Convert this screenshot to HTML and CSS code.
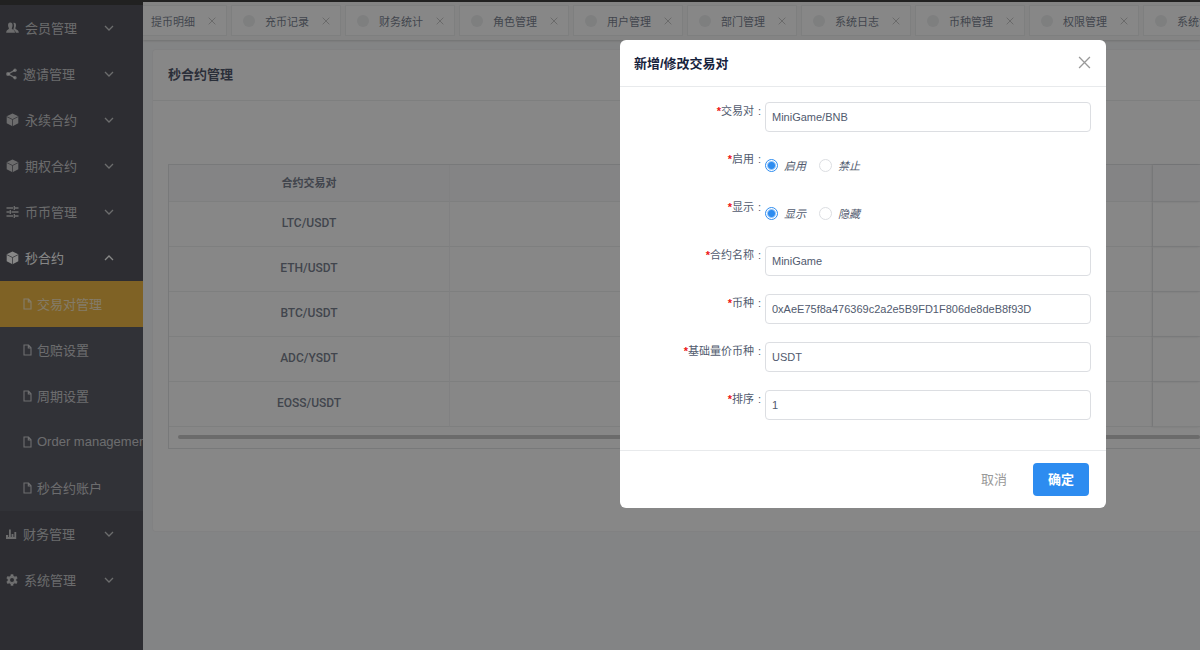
FILE: index.html
```html
<!DOCTYPE html>
<html lang="zh-CN">
  <head>
    <meta charset="UTF-8" />
    <meta name="viewport" content="width=device-width, initial-scale=1.0" />
    <title>秒合约管理</title>
    <link rel="stylesheet" href="styles.css">
  </head>
  <body>
    <!-- icons -->
    <svg class="sprite" aria-hidden="true">
      <symbol id="cube" viewBox="0 0 13 14">
        <path d="M6.5 0.5 L12.3 3.3 V10.3 L6.5 13.3 L0.7 10.3 V3.3 Z" fill="currentColor" />
        <path class="cut" d="M0.7 3.6 L6.5 6.5 L12.3 3.6 M6.5 6.5 V13.3" />
      </symbol>
      <symbol id="down" viewBox="0 0 10 6">
        <path d="M1 1 L5 5 L9 1" fill="none" stroke="currentColor" stroke-width="1.3" />
      </symbol>
      <symbol id="up" viewBox="0 0 10 6">
        <path d="M1 5 L5 1 L9 5" fill="none" stroke="currentColor" stroke-width="1.3" />
      </symbol>
      <symbol id="doc" viewBox="0 0 9 12">
        <path d="M1 1 H5.5 L8 3.8 V11 H1 Z M5.3 1 V4 H8" fill="none" stroke="currentColor" stroke-width="1.1" />
      </symbol>
      <symbol id="close" viewBox="0 0 12 12">
        <path d="M1 1 L11 11 M11 1 L1 11" fill="none" stroke="currentColor" stroke-width="1.2" />
      </symbol>
    </svg>

    <div class="layout">
      <nav class="sidebar">
        <a class="menu-item" href="#">
          <svg width="13" height="12" viewBox="0 0 13 12" fill="currentColor">
            <path d="M7.4 0.8 C9.4 0.4 10.2 1.8 10 3.4 C9.9 4.8 9.3 5.3 9.4 6.6 C9.6 7.8 12.8 7.8 12.8 10.8 H9.8 C9.6 8.6 7.8 8 7.2 7.4 C8.2 5.8 8.3 3 7.4 0.8 Z" />
            <path d="M4.2 0.6 C6.2 0.6 6.7 2.2 6.5 3.9 C6.3 5.2 5.8 5.4 5.8 6.6 C6 7.8 9 7.8 9 10.8 H0.2 C0.2 7.8 2.8 7.8 2.9 6.6 C2.9 5.4 2.3 5.2 2.1 3.9 C1.9 2.2 2.4 0.6 4.2 0.6 Z" />
          </svg>
          <span>会员管理</span>
          <svg class="arrow"><use href="#down" /></svg>
        </a>
        <a class="menu-item" href="#">
          <svg width="11" height="12" viewBox="0 0 11 12" fill="currentColor">
            <path d="M9 2.2 L2.2 6 L9 9.8" fill="none" stroke="currentColor" stroke-width="1.4" />
            <circle cx="9" cy="2.2" r="1.7" /><circle cx="2" cy="6" r="1.9" /><circle cx="9" cy="9.8" r="1.7" />
          </svg>
          <span>邀请管理</span>
          <svg class="arrow"><use href="#down" /></svg>
        </a>
        <a class="menu-item" href="#">
          <svg width="13" height="14"><use href="#cube" /></svg>
          <span>永续合约</span>
          <svg class="arrow"><use href="#down" /></svg>
        </a>
        <a class="menu-item" href="#">
          <svg width="13" height="14"><use href="#cube" /></svg>
          <span>期权合约</span>
          <svg class="arrow"><use href="#down" /></svg>
        </a>
        <a class="menu-item" href="#">
          <svg width="13" height="12" viewBox="0 0 13 12" fill="none" stroke="currentColor" stroke-width="1.3">
            <path d="M0.5 2 H7 M9 2 H12.5 M0.5 6 H3.5 M5.5 6 H12.5 M0.5 10 H7 M9 10 H12.5 M8.3 0 V4 M4.3 4 V8 M8.3 8 V12" />
          </svg>
          <span>币币管理</span>
          <svg class="arrow"><use href="#down" /></svg>
        </a>
        <a class="menu-item open" href="#">
          <svg width="13" height="14"><use href="#cube" /></svg>
          <span>秒合约</span>
          <svg class="arrow"><use href="#up" /></svg>
        </a>
        <div class="submenu">
          <a class="sub-item active" href="#"><svg width="9" height="12"><use href="#doc" /></svg><span>交易对管理</span></a>
          <a class="sub-item" href="#"><svg width="9" height="12"><use href="#doc" /></svg><span>包赔设置</span></a>
          <a class="sub-item" href="#"><svg width="9" height="12"><use href="#doc" /></svg><span>周期设置</span></a>
          <a class="sub-item" href="#"><svg width="9" height="12"><use href="#doc" /></svg><span>Order management</span></a>
          <a class="sub-item" href="#"><svg width="9" height="12"><use href="#doc" /></svg><span>秒合约账户</span></a>
        </div>
        <a class="menu-item" href="#">
          <svg width="11" height="12" viewBox="0 0 11 12" fill="currentColor">
            <path d="M0 7 H2.2 V9 H3 V1.5 H4.8 V9 H5.6 V6 H7.4 V9 H8.4 V4 H10.2 V11 H0 Z" />
          </svg>
          <span>财务管理</span>
          <svg class="arrow"><use href="#down" /></svg>
        </a>
        <a class="menu-item" href="#">
          <svg width="12" height="12" viewBox="0 0 12 12">
            <circle cx="6" cy="6" r="3.2" fill="none" stroke="currentColor" stroke-width="2.4" />
            <path d="M6 0.2 V2 M6 10 V11.8 M1 3.1 L2.6 4 M9.4 8 L11 8.9 M1 8.9 L2.6 8 M9.4 4 L11 3.1" stroke="currentColor" stroke-width="2.6" />
          </svg>
          <span>系统管理</span>
          <svg class="arrow"><use href="#down" /></svg>
        </a>
      </nav>

      <main class="main">
        <div class="tabs">
          <div class="tab first">提币明细<svg><use href="#close" /></svg></div>
          <div class="tab"><i class="dot"></i>充币记录<svg><use href="#close" /></svg></div>
          <div class="tab"><i class="dot"></i>财务统计<svg><use href="#close" /></svg></div>
          <div class="tab"><i class="dot"></i>角色管理<svg><use href="#close" /></svg></div>
          <div class="tab"><i class="dot"></i>用户管理<svg><use href="#close" /></svg></div>
          <div class="tab"><i class="dot"></i>部门管理<svg><use href="#close" /></svg></div>
          <div class="tab"><i class="dot"></i>系统日志<svg><use href="#close" /></svg></div>
          <div class="tab"><i class="dot"></i>币种管理<svg><use href="#close" /></svg></div>
          <div class="tab"><i class="dot"></i>权限管理<svg><use href="#close" /></svg></div>
          <div class="tab"><i class="dot"></i>系统设置<svg><use href="#close" /></svg></div>
        </div>

        <section class="card">
          <h2 class="card-title">秒合约管理</h2>
          <div class="card-body">
            <div class="table-wrap">
              <table class="table">
                <thead>
                  <tr><th class="col-pair">合约交易对</th><th></th><th class="col-fixed"></th></tr>
                </thead>
                <tbody>
                  <tr><td>LTC/USDT</td><td></td><td class="col-fixed"></td></tr>
                  <tr><td>ETH/USDT</td><td></td><td class="col-fixed"></td></tr>
                  <tr><td>BTC/USDT</td><td></td><td class="col-fixed"></td></tr>
                  <tr><td>ADC/YSDT</td><td></td><td class="col-fixed"></td></tr>
                  <tr><td>EOSS/USDT</td><td></td><td class="col-fixed"></td></tr>
                </tbody>
              </table>
              <div class="scrollbar"></div>
            </div>
          </div>
        </section>
      </main>
    </div>

    <div class="mask">
      <form class="modal">
        <div class="modal-header">
          <h2>新增/修改交易对</h2>
          <button type="button" class="close-button" aria-label="关闭"><svg><use href="#close" /></svg></button>
        </div>
        <div class="modal-body">
          <div class="row">
            <label class="label" for="pair"><b>*</b>交易对<span class="colon">:</span></label>
            <input type="text" id="pair" value="MiniGame/BNB" />
          </div>
          <div class="row">
            <span class="label"><b>*</b>启用<span class="colon">:</span></span>
            <label class="radio"><input type="radio" name="enable" checked />启用</label>
            <label class="radio"><input type="radio" name="enable" />禁止</label>
          </div>
          <div class="row">
            <span class="label"><b>*</b>显示<span class="colon">:</span></span>
            <label class="radio"><input type="radio" name="show" checked />显示</label>
            <label class="radio"><input type="radio" name="show" />隐藏</label>
          </div>
          <div class="row">
            <label class="label" for="name"><b>*</b>合约名称<span class="colon">:</span></label>
            <input type="text" id="name" value="MiniGame" />
          </div>
          <div class="row">
            <label class="label" for="coin"><b>*</b>币种<span class="colon">:</span></label>
            <input type="text" id="coin" value="0xAeE75f8a476369c2a2e5B9FD1F806de8deB8f93D" />
          </div>
          <div class="row">
            <label class="label" for="base"><b>*</b>基础量价币种<span class="colon">:</span></label>
            <input type="text" id="base" value="USDT" />
          </div>
          <div class="row">
            <label class="label" for="sort"><b>*</b>排序<span class="colon">:</span></label>
            <input type="text" id="sort" value="1" />
          </div>
        </div>
        <div class="modal-footer">
          <button type="button" class="cancel">取消</button>
          <button type="button" class="confirm">确定</button>
        </div>
      </form>
    </div>
  </body>
</html>
```

FILE: styles.css
```css
* {
  box-sizing: border-box;
  margin: 0;
  padding: 0;
}

body,
input,
button {
  font-family: "Liberation Sans", "Noto Sans CJK SC", sans-serif;
  font-size: 11px;
}

body {
  background-color: #000;
  color: #515a6e;
  overflow: hidden;
}

.sprite {
  display: none;
}

.layout {
  display: flex;
  min-height: 100vh;
}

/* sidebar */
.sidebar {
  flex: none;
  width: 143px;
  border-top: 5px solid #000;
  background-color: #1e202b;
  overflow: hidden;
}

.menu-item,
.sub-item {
  display: flex;
  align-items: center;
  height: 46px;
  color: rgba(255, 255, 255, 0.7);
  font-size: 13px;
  text-decoration: none;
  white-space: nowrap;
}

.menu-item span,
.sub-item span {
  padding-bottom: 2px;
}

.menu-item {
  gap: 6px;
  padding: 0 29px 0 6px;
}

.menu-item.open {
  color: #fff;
}

.menu-item .arrow {
  width: 10px;
  height: 6px;
  margin-left: auto;
}

.cut {
  fill: none;
  stroke: #1e202b;
  stroke-width: 0.7;
}

.submenu {
  background-color: #282b38;
}

.sub-item {
  gap: 5px;
  padding-left: 23px;
}

.sub-item svg {
  flex: none;
}

.sub-item.active {
  background-color: #eba40c;
}

/* main */
.main {
  flex: 1;
  min-width: 0;
  border-top: 2px solid #000;
  background-color: #f5f7f9;
  overflow: hidden;
}

.tabs {
  display: flex;
  gap: 4px;
  height: 38px;
  padding-top: 3px;
  background-color: #f8f8f8;
  box-shadow: 0 1px 2px rgba(0, 0, 0, 0.2);
}

.tab {
  display: flex;
  flex: none;
  align-items: center;
  width: 110px;
  height: 31px;
  padding-left: 11px;
  border: 1px solid #e8eaec;
  background-color: #fff;
  white-space: nowrap;
}

.tab.first {
  width: 84px;
  padding-left: 8px;
  border-left: 0;
}

.tab svg {
  width: 8px;
  height: 8px;
  margin-left: 13px;
  color: #a5a5a5;
}

.dot {
  width: 12px;
  height: 12px;
  margin-right: 10px;
  border-radius: 50%;
  background-color: #e8eaec;
}

.card {
  margin: 9px 0 0 9px;
  border: 1px solid #f0f1f3;
  border-right: 0;
  border-radius: 4px 0 0 4px;
  background-color: #fff;
}

.card-title {
  padding-left: 15px;
  border-bottom: 1px solid #e8eaec;
  color: #17233d;
  font-size: 13px;
  font-weight: 700;
  line-height: 50px;
}

.card-body {
  padding: 63px 0 82px 15px;
}

.table-wrap {
  border: 1px solid #d9dbdf;
  border-right: 0;
}

.table {
  width: 100%;
  border-collapse: separate;
  border-spacing: 0;
  table-layout: fixed;
  text-align: center;
}

.table th,
.table td {
  height: 45px;
  padding-bottom: 2px;
  border-right: 1px solid #f0f1f3;
  border-bottom: 1px solid #e8eaec;
}

.table td {
  font-family: Roboto, sans-serif;
  font-size: 12px;
  font-weight: 500;
}

.table th {
  height: 37px;
  background-color: #f8f8f9;
  font-weight: 700;
}

.table .col-pair {
  width: 281px;
}

.table .col-fixed {
  width: 47px;
  border-right: 0;
  box-shadow: -1px 0 2px rgba(0, 0, 0, 0.15);
}

.scrollbar {
  height: 4px;
  margin: 8px 0 9px 9px;
  border-radius: 2px;
  background-color: #b8b8b8;
}

/* modal */
.mask {
  position: fixed;
  inset: 0;
  display: flex;
  align-items: flex-start;
  justify-content: flex-end;
  padding: 40px 94px 0 0;
  background-color: rgba(55, 55, 55, 0.6);
}

.modal {
  width: 486px;
  border-radius: 6px;
  background-color: #fff;
}

.modal-header {
  display: flex;
  align-items: center;
  justify-content: space-between;
  height: 47px;
  padding: 0 15px 2px 14px;
  border-bottom: 1px solid #e8eaec;
}

.modal-header h2 {
  color: #17233d;
  font-size: 13px;
  font-weight: 700;
}

.close-button {
  width: 13px;
  height: 13px;
  border: 0;
  background: none;
  color: #999;
}

.close-button svg {
  display: block;
  width: 13px;
  height: 13px;
}

.modal-body {
  display: flex;
  flex-direction: column;
  gap: 18px;
  padding: 15px 15px 30px;
}

.row {
  display: flex;
  align-items: center;
  height: 30px;
}

.label {
  flex: none;
  align-self: flex-start;
  width: 130px;
  line-height: 18px;
  text-align: right;
}

.label b {
  color: #ed1414;
}

.colon {
  margin: 0 4px;
}

.row input[type="text"] {
  flex: 1;
  min-width: 0;
  height: 30px;
  padding: 0 6px;
  border: 1px solid #dcdee2;
  border-radius: 4px;
  color: #515a6e;
}

.radio {
  display: flex;
  align-items: center;
  gap: 6px;
  margin-right: 13px;
  font-style: italic;
}

.radio input {
  appearance: none;
  width: 13px;
  height: 13px;
  border: 1px solid #dcdee2;
  border-radius: 50%;
}

.radio input:checked {
  border-color: #2d8cf0;
  background: radial-gradient(circle, #2d8cf0 3px, #fff 5px);
}

.modal-footer {
  display: flex;
  justify-content: flex-end;
  gap: 11px;
  padding: 12px 17px;
  border-top: 1px solid #e8eaec;
}

.modal-footer button {
  height: 33px;
  padding: 0 15px 2px;
  border: 0;
  border-radius: 4px;
  background: none;
  color: #999;
  font-size: 13px;
}

.modal-footer .confirm {
  background-color: #2d8cf0;
  color: #fff;
  font-weight: 700;
}
```
